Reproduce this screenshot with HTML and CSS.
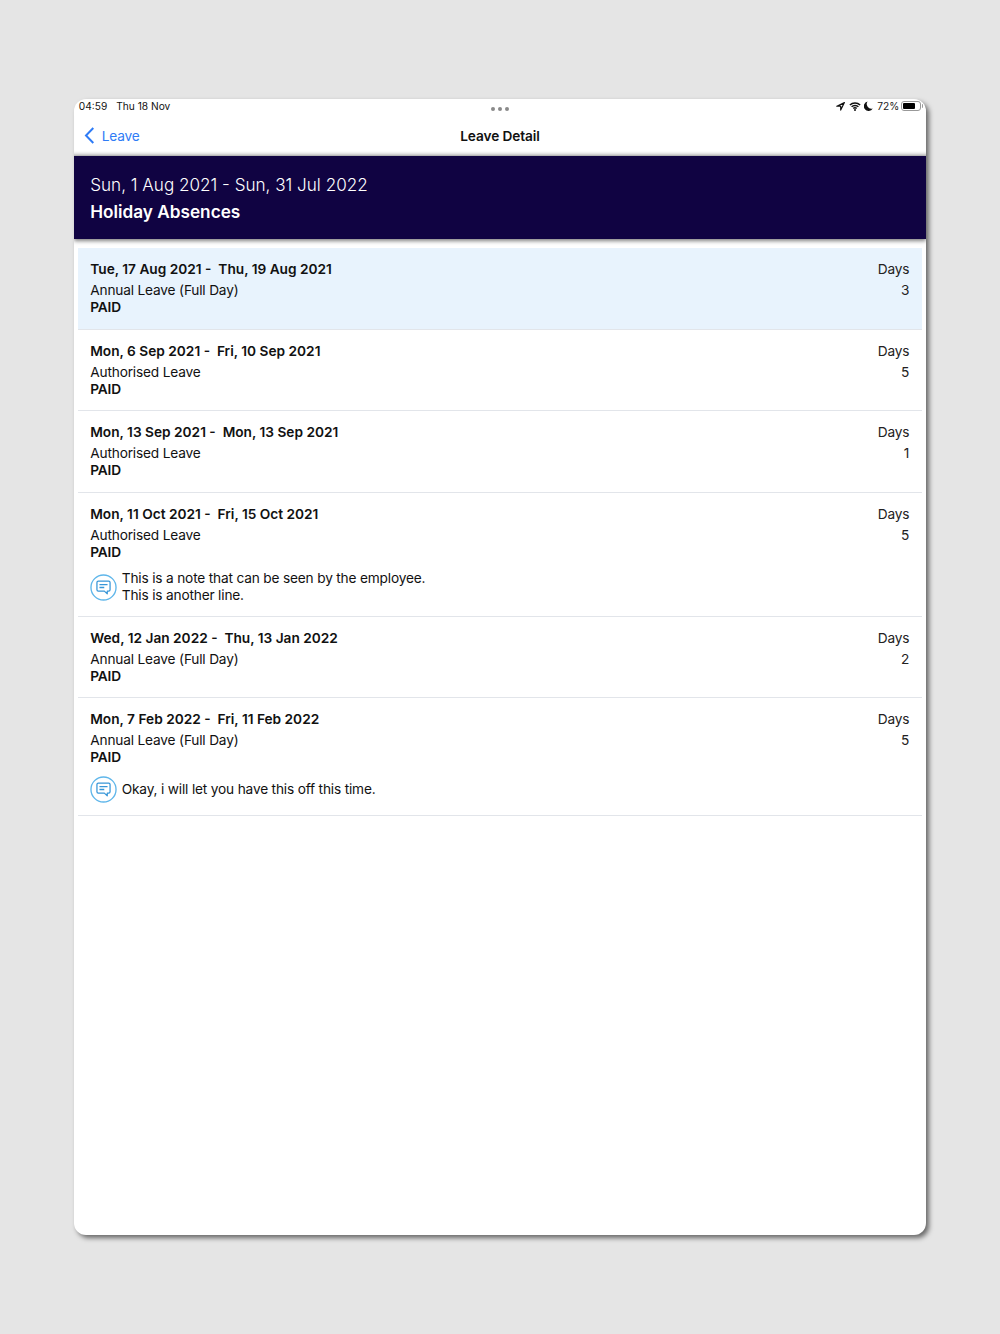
FILE: index.html
```html
<!DOCTYPE html>
<html lang="en">
<head>
<meta charset="utf-8">
<title>Leave Detail</title>
<link rel="stylesheet" href="styles.css">
</head>
<body>
<svg class="defs" width="0" height="0" aria-hidden="true">
  <symbol id="note" viewBox="0 0 28 28">
    <circle cx="14" cy="14" r="13" fill="none" stroke="#5fb6ea" stroke-width="1.4"/>
    <path d="M8.6 7.4h10.8a1.4 1.4 0 0 1 1.4 1.4v7.6a1.4 1.4 0 0 1-1.4 1.4h-1.5v2.8l-3-2.8H8.6a1.4 1.4 0 0 1-1.4-1.4V8.800a1.4 1.4 0 0 1 1.400-1.400z" fill="none" stroke="#3796d8" stroke-width="1.300" stroke-linejoin="round"/>
    <path d="M9.800 11h8.400M9.800 14h5" fill="none" stroke="#3796d8" stroke-width="1.300"/>
  </symbol>
</svg>
<main class="device">
  <header class="status">
    <div class="status-left"><span>04:59</span><span>Thu 18 Nov</span></div>
    <div class="dots"><i></i><i></i><i></i></div>
    <div class="status-right">
      <svg class="ic-loc" width="9" height="9" viewBox="0 0 9 9"><path d="M8.400.6.800 4.200h3.900v3.900z" fill="none" stroke="#111" stroke-width="1.200" stroke-linejoin="round"/></svg>
      <svg class="ic-wifi" width="12" height="9" viewBox="0 0 13 10"><path d="M.8 3.400a8 8 0 0 1 11.400 0M2.700 5.400a5.300 5.300 0 0 1 7.600 0M4.600 7.200a2.600 2.600 0 0 1 3.800 0" fill="none" stroke="#111" stroke-width="1.600"/><circle cx="6.500" cy="8.900" r="1.100" fill="#111"/></svg>
      <svg class="ic-moon" width="9" height="10" viewBox="0 0 9 10"><path d="M3.600.4a4.800 4.800 0 1 0 5.200 7A4.600 4.600 0 0 1 3.600.4z" fill="#111"/></svg>
      <span class="pct">72%</span>
      <span class="battery"><span class="battery-fill"></span></span>
    </div>
  </header>
  <nav class="nav">
    <a class="back" href="#">
      <svg width="11" height="17" viewBox="0 0 11 17"><path d="M9.300 1 2 8.500l7.300 7.500" fill="none" stroke="#2f7cf6" stroke-width="2"/></svg>
      <span>Leave</span>
    </a>
    <h1>Leave Detail</h1>
  </nav>
  <section class="banner">
    <p class="period">Sun, 1 Aug 2021 - Sun, 31 Jul 2022</p>
    <h2>Holiday Absences</h2>
  </section>
  <ul class="list">
    <li class="row selected">
      <div class="main"><p class="dates">Tue, 17 Aug 2021 - &nbsp;Thu, 19 Aug 2021</p><p class="type">Annual Leave (Full Day)</p><p class="paid">PAID</p></div>
      <div class="days"><span>Days</span><span class="num">3</span></div>
    </li>
    <li class="row">
      <div class="main"><p class="dates">Mon, 6 Sep 2021 - &nbsp;Fri, 10 Sep 2021</p><p class="type">Authorised Leave</p><p class="paid">PAID</p></div>
      <div class="days"><span>Days</span><span class="num">5</span></div>
    </li>
    <li class="row">
      <div class="main"><p class="dates">Mon, 13 Sep 2021 - &nbsp;Mon, 13 Sep 2021</p><p class="type">Authorised Leave</p><p class="paid">PAID</p></div>
      <div class="days"><span>Days</span><span class="num">1</span></div>
    </li>
    <li class="row">
      <div class="main"><p class="dates">Mon, 11 Oct 2021 - &nbsp;Fri, 15 Oct 2021</p><p class="type">Authorised Leave</p><p class="paid">PAID</p>
        <div class="note"><svg width="27" height="27"><use href="#note"/></svg><p>This is a note that can be seen by the employee.<br>This is another line.</p></div>
      </div>
      <div class="days"><span>Days</span><span class="num">5</span></div>
    </li>
    <li class="row">
      <div class="main"><p class="dates">Wed, 12 Jan 2022 - &nbsp;Thu, 13 Jan 2022</p><p class="type">Annual Leave (Full Day)</p><p class="paid">PAID</p></div>
      <div class="days"><span>Days</span><span class="num">2</span></div>
    </li>
    <li class="row">
      <div class="main"><p class="dates">Mon, 7 Feb 2022 - &nbsp;Fri, 11 Feb 2022</p><p class="type">Annual Leave (Full Day)</p><p class="paid">PAID</p>
        <div class="note"><svg width="27" height="27"><use href="#note"/></svg><p>Okay, i will let you have this off this time.</p></div>
      </div>
      <div class="days"><span>Days</span><span class="num">5</span></div>
    </li>
  </ul>
</main>
</body>
</html>
```
FILE: styles.css
```css
* { box-sizing: border-box; }
html, body { margin: 0; padding: 0; }
body {
  height: 1334px;
  padding-top: 99px;
  background: #e5e5e5;
  font-family: Inter, "Liberation Sans", sans-serif;
  color: #111;
  overflow: hidden;
}
p, h1, h2, ul { margin: 0; padding: 0; }
.defs { position: absolute; }
.device {
  width: 852.500px;
  height: 1136px;
  margin: 0 auto;
  background: #fff;
  border-radius: 12px;
  box-shadow: 3px 3px 5px rgba(0, 0, 0, .55);
  overflow: hidden;
}
.status {
  height: 17px;
  padding: 0 5px 3px;
  display: flex;
  align-items: center;
  justify-content: space-between;
  position: relative;
  font-size: 10.200px;
}
.status-left { display: flex; gap: 9px; }
.dots { position: absolute; left: 417px; top: 8px; display: flex; gap: 3px; }
.dots i { width: 4px; height: 4px; border-radius: 50%; background: #8a8a8a; }
.status-right { display: flex; align-items: center; color: #222; font-size: 10.200px; }
.ic-wifi { margin-left: 4px; }
.ic-moon { margin-left: 3px; }
.pct { margin-left: 4px; }
.battery {
  position: relative;
  width: 20px; height: 10px;
  margin-left: 2px;
  border: 1px solid #999;
  border-radius: 3px;
  padding: 1px;
  display: block;
}
.battery::after {
  content: "";
  position: absolute;
  right: -3px;
  top: 2px;
  width: 1.500px;
  height: 4px;
  background: #999;
  border-radius: 0 1px 1px 0;
}
.battery-fill { display: block; width: 72%; height: 100%; background: #000; border-radius: 1px; }
.nav {
  height: 40px;
  position: relative;
  display: flex;
  align-items: center;
  justify-content: center;
  box-shadow: inset 0 -5px 4px -4px rgba(0, 0, 0, .4);
}
.nav h1 { font-size: 13.700px; font-weight: 600; letter-spacing: -.1px; }
.back {
  position: absolute;
  left: 10px;
  top: 11px;
  display: flex;
  align-items: center;
  gap: 7px;
  color: #2f7cf6;
  font-size: 13.700px;
  letter-spacing: -.2px;
  text-decoration: none;
}
.banner {
  height: 83px;
  padding: 17px 17px 0 16.500px;
  background: #100342;
  color: #fff;
  box-shadow: 0 2px 4px rgba(0, 0, 0, .5);
  position: relative;
}
.period { font-size: 17.100px; line-height: 23px; font-weight: 300; }
.banner h2 { font-size: 17.200px; line-height: 23px; margin-top: 4px; font-weight: 600; }
.list { list-style: none; margin: 9px 4px 0; }
.row {
  padding: 12px 13px 12.600px 12.500px;
  display: flex;
  justify-content: space-between;
  border-bottom: 1px solid #e2e5ea;
  font-size: 13.700px;
  letter-spacing: -.18px;
}
.row.selected { background: #e8f3fd; }
.dates { font-weight: 600; line-height: 18px; letter-spacing: 0; }
.type { line-height: 17px; margin-top: 4px; }
.paid { font-weight: 600; line-height: 17px; }
.days { display: flex; flex-direction: column; align-items: flex-end; line-height: 18px; color: #222; }
.num { line-height: 17px; margin-top: 4px; }
.note { display: flex; align-items: center; gap: 4.500px; margin-top: 9.500px; min-height: 26px; line-height: 16.500px; }
.note svg { flex: none; margin-bottom: -1px; }
```
